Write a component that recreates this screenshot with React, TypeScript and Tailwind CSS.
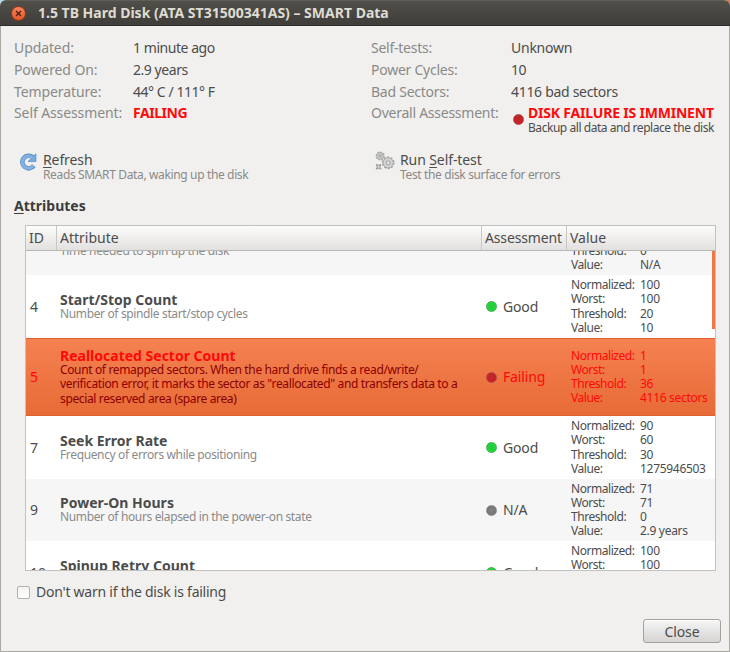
import type { ReactNode } from "react";
import { clsx } from "clsx";

type Status = "good" | "failing" | "na";

type Attribute = {
  id: number;
  name: string;
  description: string[];
  status: Status;
  values: [string, string, string, string];
  rowClass: string;
};

const attributes: Attribute[] = [
  {
    id: 3,
    name: "Spinup Time",
    description: ["Time needed to spin up the disk"],
    status: "na",
    values: ["97", "97", "0", "N/A"],
    rowClass: "-mt-[38px] h-[62px] bg-[#f6f6f6]",
  },
  {
    id: 4,
    name: "Start/Stop Count",
    description: ["Number of spindle start/stop cycles"],
    status: "good",
    values: ["100", "100", "20", "10"],
    rowClass: "h-[63px] bg-white",
  },
  {
    id: 5,
    name: "Reallocated Sector Count",
    description: [
      "Count of remapped sectors. When the hard drive finds a read/write/",
      "verification error, it marks the sector as \"reallocated\" and transfers data to a",
      "special reserved area (spare area)",
    ],
    status: "failing",
    values: ["1", "1", "36", "4116 sectors"],
    rowClass:
      "relative z-10 h-[78px] border-y border-[#e2602f] bg-linear-to-b from-[#f58151] to-[#e76b36] text-[#ff0808]",
  },
  {
    id: 7,
    name: "Seek Error Rate",
    description: ["Frequency of errors while positioning"],
    status: "good",
    values: ["90", "60", "30", "1275946503"],
    rowClass: "h-[63px] bg-white",
  },
  {
    id: 9,
    name: "Power-On Hours",
    description: ["Number of hours elapsed in the power-on state"],
    status: "na",
    values: ["71", "71", "0", "2.9 years"],
    rowClass: "h-[62px] bg-[#f6f6f6]",
  },
  {
    id: 10,
    name: "Spinup Retry Count",
    description: ["Number of retry attempts to spin up"],
    status: "good",
    values: ["100", "100", "97", "0"],
    rowClass: "h-[63px] bg-white",
  },
];

const statusLabels: Record<Status, string> = {
  good: "Good",
  failing: "Failing",
  na: "N/A",
};

const valueLabels = ["Normalized:", "Worst:", "Threshold:", "Value:"];

function Dot({ status, className }: { status: Status; className?: string }) {
  return (
    <span
      className={clsx(
        "size-[11px] shrink-0 rounded-full border",
        status === "good" && "border-[#3fae50] bg-radial from-[#25c63b] to-[#1ee038]",
        status === "failing" && "border-[#b5484a] bg-radial-[at_50%_35%] from-[#b52c2c] to-[#d8181c]",
        status === "na" && "border-[#8c8c8c] bg-radial from-[#828282] to-[#707070]",
        className,
      )}
    />
  );
}

function Info({ label, children }: { label: string; children: ReactNode }) {
  return (
    <>
      <dt className="text-[#8a8a88]">{label}</dt>
      <dd className="tracking-[-0.45px]">{children}</dd>
    </>
  );
}

function Action({
  icon,
  title,
  description,
}: {
  icon: ReactNode;
  title: ReactNode;
  description: string;
}) {
  return (
    <button type="button" className="flex items-start text-left">
      {icon}
      <span className="flex flex-col">
        <span className="leading-[17px] tracking-[-0.1px]">{title}</span>
        <span className="text-[12px] leading-[14px] tracking-[-0.36px] text-[#8a8a88]">
          {description}
        </span>
      </span>
    </button>
  );
}

function Mnemonic({ children }: { children: ReactNode }) {
  return <span className="underline decoration-1 underline-offset-2">{children}</span>;
}

function RefreshIcon() {
  return (
    <svg className="mt-[2px] ml-[5px] mr-[6px] h-[18px] w-[18px]" viewBox="0 0 18 18" fill="none">
      <path d="M14.8 12.6a6.3 6.3 0 1 1-.9-8.2" stroke="#5b8fc6" strokeWidth="4.6" />
      <path d="M16.9.8v7.8H9z" fill="#78aade" stroke="#5b8fc6" strokeWidth=".8" />
      <path d="M14.4 12.4a6.1 6.1 0 1 1-.8-7.6" stroke="#82b1e2" strokeWidth="3.2" />
    </svg>
  );
}

function GearsIcon() {
  return (
    <svg className="mr-[5px] ml-[5px] h-5 w-5" viewBox="0 0 20 20" fill="none">
      <circle cx="5.2" cy="5" r="3.9" stroke="#a3a3a3" strokeWidth="1.4" strokeDasharray="1.8 1.2" />
      <circle cx="5.2" cy="5" r="3.3" fill="#cfcfcf" stroke="#a6a6a6" strokeWidth=".8" />
      <circle cx="5.2" cy="5" r="1.3" fill="#c3c3c3" stroke="#999" strokeWidth=".7" />
      <circle cx="13.2" cy="11.8" r="5.6" stroke="#a3a3a3" strokeWidth="1.6" strokeDasharray="2.2 1.3" />
      <circle cx="13.2" cy="11.8" r="5" fill="#d3d3d3" stroke="#a6a6a6" strokeWidth=".8" />
      <circle cx="13.2" cy="11.8" r="2" fill="#e6e6e4" stroke="#999" strokeWidth=".9" />
      <path d="M1.2 13.4L6 18.2M6 13.4l-4.8 4.8" stroke="#999" strokeWidth="1.8" />
      <path d="M3.6 13.4v4.8M1.2 15.8H6" stroke="#b5b5b5" strokeWidth="1.2" />
      <circle cx="3.6" cy="15.8" r="1" fill="#d8d8d8" />
    </svg>
  );
}

function AttributeRow({ attribute }: { attribute: Attribute }) {
  const { id, name, description, status, values, rowClass } = attribute;

  return (
    <div className={clsx("flex shrink-0 items-center", rowClass)}>
      <div className="w-[34px] pl-1">{id}</div>
      <div className="w-[426px]">
        <div className="leading-[15px] font-bold">{name}</div>
        <div
          className={clsx(
            "text-[12px] leading-[14.2px] tracking-[-0.36px] whitespace-nowrap",
            status === "failing" ? "text-[#8b0000]" : "text-[#8a8a8a]",
          )}
        >
          {description.map((line) => (
            <div key={line}>{line}</div>
          ))}
        </div>
      </div>
      <div className="flex w-[85px] items-center gap-[6px] tracking-[-0.15px]">
        <Dot status={status} />
        {statusLabels[status]}
      </div>
      <dl className="text-[12px] leading-[14.2px] whitespace-nowrap">
        {valueLabels.map((label, i) => (
          <div key={label} className="flex">
            <dt className="w-[69px] tracking-[-0.45px]">{label}</dt>
            <dd className="tracking-[-0.3px]">{values[i]}</dd>
          </div>
        ))}
      </dl>
    </div>
  );
}

export default function App() {
  return (
    <div className="h-[652px] w-[730px] bg-linear-to-r from-[#b9d7ea] to-[#e8714d] font-['Noto_Sans',sans-serif] text-[14px] leading-5 text-[#4c4c4c]">
      <div className="flex h-full flex-col overflow-hidden rounded-t-[6px] bg-[#f1f0ee]">
        <header className="flex h-[26px] shrink-0 items-center border-t border-b border-t-[#5f5e58] border-b-[#2c2b28] bg-linear-to-b from-[#504f49] to-[#3e3d39] pl-[11px]">
          <button
            type="button"
            aria-label="Close window"
            className="mt-px flex size-[15px] items-center justify-center rounded-full border border-[#93381d] bg-linear-to-b from-[#f78259] to-[#e4582a]"
          >
            <svg className="size-[7px]" viewBox="0 0 7 7" stroke="#4a2015" strokeWidth="1.4">
              <path d="M1 1l5 5M6 1L1 6" />
            </svg>
          </button>
          <h1 className="ml-3 font-bold text-[#dfdbd2]">
            1.5 TB Hard Disk (ATA ST31500341AS) – SMART Data
          </h1>
        </header>

        <main className="flex min-h-0 flex-1 flex-col border-x border-b border-[#aaa8a3]">
          <div className="flex h-[125px] shrink-0 pt-[11px] pl-[13px] whitespace-nowrap">
            <dl className="grid w-[357px] auto-rows-[21.75px] grid-cols-[119px_1fr] content-start leading-[22px] tracking-[-0.1px]">
              <Info label="Updated:">1 minute ago</Info>
              <Info label="Powered On:">2.9 years</Info>
              <Info label="Temperature:">44° C / 111° F</Info>
              <Info label="Self Assessment:">
                <b className="text-[#ff0a0a]">FAILING</b>
              </Info>
            </dl>
            <dl className="grid auto-rows-[21.75px] grid-cols-[140px_1fr] content-start leading-[22px] tracking-[-0.25px]">
              <Info label="Self-tests:">
                <span className="tracking-[-0.25px]">Unknown</span>
              </Info>
              <Info label="Power Cycles:">10</Info>
              <Info label="Bad Sectors:">
                <span className="tracking-[-0.3px]">4116 bad sectors</span>
              </Info>
              <Info label="Overall Assessment:">
                <div className="flex gap-1 pl-0.5">
                  <Dot status="failing" className="mt-[12px]" />
                  <div>
                    <b className="block leading-[22px] tracking-[-0.2px] text-[#ff0a0a]">
                      DISK FAILURE IS IMMINENT
                    </b>
                    <span className="-mt-[3px] block text-[12px] leading-[14px] tracking-[-0.45px]">
                      Backup all data and replace the disk
                    </span>
                  </div>
                </div>
              </Info>
            </dl>
          </div>

          <div className="grid h-[45px] shrink-0 grid-cols-[356px_1fr] items-start pl-[13px] whitespace-nowrap">
            <Action
              icon={<RefreshIcon />}
              title={
                <>
                  <Mnemonic>R</Mnemonic>efresh
                </>
              }
              description="Reads SMART Data, waking up the disk"
            />
            <Action
              icon={<GearsIcon />}
              title={
                <>
                  Run <Mnemonic>S</Mnemonic>elf-test
                </>
              }
              description="Test the disk surface for errors"
            />
          </div>

          <h2 className="pl-[13px] font-bold text-[#3c3c3c]">
            <Mnemonic>A</Mnemonic>ttributes
          </h2>

          <section className="relative mt-[9px] ml-6 flex h-[346px] w-[691px] shrink-0 flex-col overflow-hidden border border-[#c4c2be] bg-white">
            <div className="flex h-[25px] shrink-0 border-b border-[#b9b7b3] bg-linear-to-b from-[#fcfcfc] to-[#e3e1df] leading-6">
              <div className="w-[31px] border-r border-[#c9c7c4] pl-[3px]">ID</div>
              <div className="w-[425px] border-r border-[#c9c7c4] pl-[3px]">Attribute</div>
              <div className="w-[85px] border-r border-[#c9c7c4] pl-[3px] tracking-[-0.15px]">
                Assessment
              </div>
              <div className="pl-[3px]">Value</div>
            </div>
            <div className="flex min-h-0 flex-1 flex-col overflow-hidden">
              {attributes.map((attribute) => (
                <AttributeRow key={attribute.id} attribute={attribute} />
              ))}
            </div>
            <div className="absolute top-[25px] right-0 h-[78px] w-[3px] bg-[#f07746]" />
          </section>

          <label className="mt-[11px] ml-4 flex items-center gap-[6px] tracking-[-0.24px]">
            <span className="size-[13px] rounded-[2px] border border-[#b5b2ad] bg-linear-to-b from-[#f3f3f2] to-white" />
            Don't warn if the disk is failing
          </label>

          <button
            type="button"
            className="mt-[17px] mr-2 h-6 w-[78px] shrink-0 self-end rounded-[3px] border border-[#a4a19c] bg-linear-to-b from-[#f6f6f6] to-[#d5d4d3] pt-px leading-[21px] tracking-[-0.1px] shadow-[inset_0_1px_0_#fff]"
          >
            Close
          </button>
        </main>
      </div>
    </div>
  );
}
